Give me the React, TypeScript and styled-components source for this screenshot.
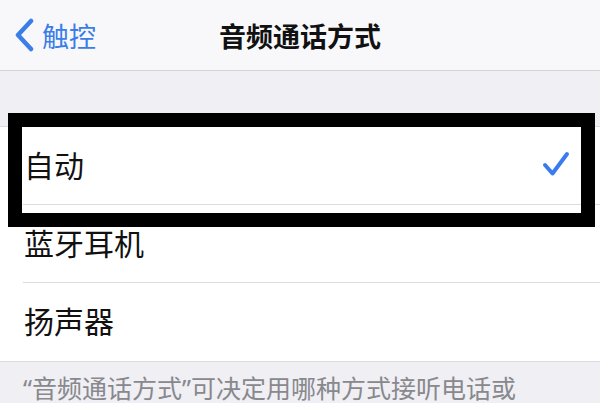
import React from "react";
import styled, { createGlobalStyle } from "styled-components";

const GlobalStyle = createGlobalStyle`
  html, body {
    margin: 0;
    padding: 0;
    background: #efeff4;
  }
  body {
    font-family: "Noto Sans CJK SC", "Noto Sans", sans-serif;
    -webkit-font-smoothing: antialiased;
  }
`;

const Screen = styled.div`
  position: relative;
  width: 600px;
  height: 403px;
  overflow: hidden;
  background: #efeff4;
`;

const NavBar = styled.header`
  display: grid;
  grid-template-columns: 1fr auto 1fr;
  align-items: center;
  height: 70px;
  background: #f8f8fa;
  border-bottom: 1px solid #d4d4d8;
`;

const BackButton = styled.a`
  display: flex;
  align-items: center;
  gap: 8px;
  padding-left: 14px;
  color: #3b7ee8;
  font-size: 27px;
  text-decoration: none;
  line-height: 1;
`;

const Title = styled.h1`
  margin: 0;
  font-size: 27px;
  font-weight: 600;
  color: #111;
  line-height: 1;
`;

const GroupGap = styled.div`
  height: 55px;
`;

const List = styled.ul`
  margin: 0;
  padding: 0;
  list-style: none;
  background: #fff;
  border-top: 1px solid #dcdce0;
  border-bottom: 1px solid #dcdce0;
`;

const Row = styled.li`
  padding-left: 23px;
`;

const RowInner = styled.div<{ $last?: boolean }>`
  display: flex;
  align-items: center;
  justify-content: space-between;
  box-sizing: border-box;
  height: 78px;
  padding: 0 30px 4px 1px;
  font-size: 30px;
  color: #111;
  border-bottom: ${({ $last }) => ($last ? "none" : "1px solid #dcdce0")};
`;

const Footer = styled.p`
  margin: 0;
  padding: 9px 23px 0;
  font-size: 25px;
  line-height: 1.3;
  color: #88888d;
  white-space: nowrap;
`;

// the curly quotes look narrow in the reference, so set them in a latin face
const Quote = styled.span`
  font-family: "Noto Sans", sans-serif;
`;

const Highlight = styled.div`
  position: absolute;
  left: 8px;
  top: 113px;
  width: 587px;
  height: 114px;
  box-sizing: border-box;
  border: 14px solid #000;
  pointer-events: none;
`;

const Chevron = () => (
  <svg width="20" height="34" viewBox="0 0 20 34">
    <path
      d="M17 3 L4 17 L17 31"
      fill="none"
      stroke="#3b7ee8"
      strokeWidth="4.5"
      strokeLinecap="round"
      strokeLinejoin="round"
    />
  </svg>
);

const Check = () => (
  <svg width="28" height="26" viewBox="0 0 28 26">
    <path
      d="M3 14 L10.5 22.5 L25 3"
      fill="none"
      stroke="#3a7cf0"
      strokeWidth="4"
      strokeLinecap="round"
      strokeLinejoin="round"
    />
  </svg>
);

const options = [
  { label: "自动", selected: true },
  { label: "蓝牙耳机", selected: false },
  { label: "扬声器", selected: false },
];

const App = () => {
  return (
    <Screen>
      <GlobalStyle />
      <NavBar>
        <BackButton href="#">
          <Chevron />
          <span>触控</span>
        </BackButton>
        <Title>音频通话方式</Title>
        <div />
      </NavBar>
      <GroupGap />
      <List>
        {options.map((opt, i) => (
          <Row key={opt.label}>
            <RowInner $last={i === options.length - 1}>
              <span>{opt.label}</span>
              {opt.selected && <Check />}
            </RowInner>
          </Row>
        ))}
      </List>
      <Footer>
        <Quote>“</Quote>音频通话方式<Quote>”</Quote>可决定用哪种方式接听电话或
      </Footer>
      <Highlight />
    </Screen>
  );
};

export default App;
